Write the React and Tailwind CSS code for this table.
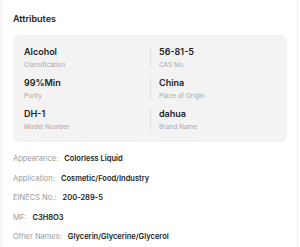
const attrs = [
  [
    { value: 'Alcohol', label: 'Classification' },
    { value: '56-81-5', label: 'CAS No.' }
  ],
  [
    { value: '99%Min', label: 'Purity' },
    { value: 'China', label: 'Place of Origin' }
  ],
  [
    { value: 'DH-1', label: 'Model Number' },
    { value: 'dahua', label: 'Brand Name' }
  ]
]

const details = [
  ['Appearance:', 'Colorless Liquid'],
  ['Application:', 'Cosmetic/Food/Industry'],
  ['EINECS No.:', '200-289-5'],
  ['MF:', 'C3H8O3'],
  ['Other Names:', 'Glycerin/Glycerine/Glycerol']
]

const AttrCell = ({ value, label, divider }) => (
  <div className={`flex flex-col ${divider ? 'border-l border-[#e2e2e2] pl-2' : ''}`}>
    <span className="text-[9px] leading-[12px] font-semibold text-[#222]">{value}</span>
    <span className="text-[6.5px] leading-[8px] text-[#a8a8a8] mt-[3px]">{label}</span>
  </div>
)

export default function App() {
  return (
    <div
      className="w-[300px] h-[247px] bg-white flex overflow-hidden"
      style={{ fontFamily: 'Inter, "Noto Sans", sans-serif' }}
    >
      <div className="w-[3px] bg-[#f7f7f7]" />
      <div className="flex-1 pl-[10px] pr-[8px]">
        <h3 className="text-[9px] leading-[12px] font-semibold text-[#222] mt-[13px]">Attributes</h3>
        <div className="mt-[10px] w-[274px] bg-[#f3f3f3] rounded-md pl-[11px] pr-[11px] pt-[11px] pb-[11px] flex flex-col gap-[8px]">
          {attrs.map((row, i) => (
            <div key={i} className="grid grid-cols-2">
              <AttrCell {...row[0]} />
              <AttrCell {...row[1]} divider />
            </div>
          ))}
        </div>
        <div className="mt-[7px] flex flex-col">
          {details.map(([k, v]) => (
            <div key={k} className="flex items-center h-[19.5px] text-[7.5px]">
              <span className="text-[#9a9a9a]">{k}</span>
              <span className="ml-[6px] font-semibold text-[#222]">{v}</span>
            </div>
          ))}
        </div>
      </div>
      <div className="w-[3px] border-l border-[#efefef] bg-white" />
    </div>
  )
}
